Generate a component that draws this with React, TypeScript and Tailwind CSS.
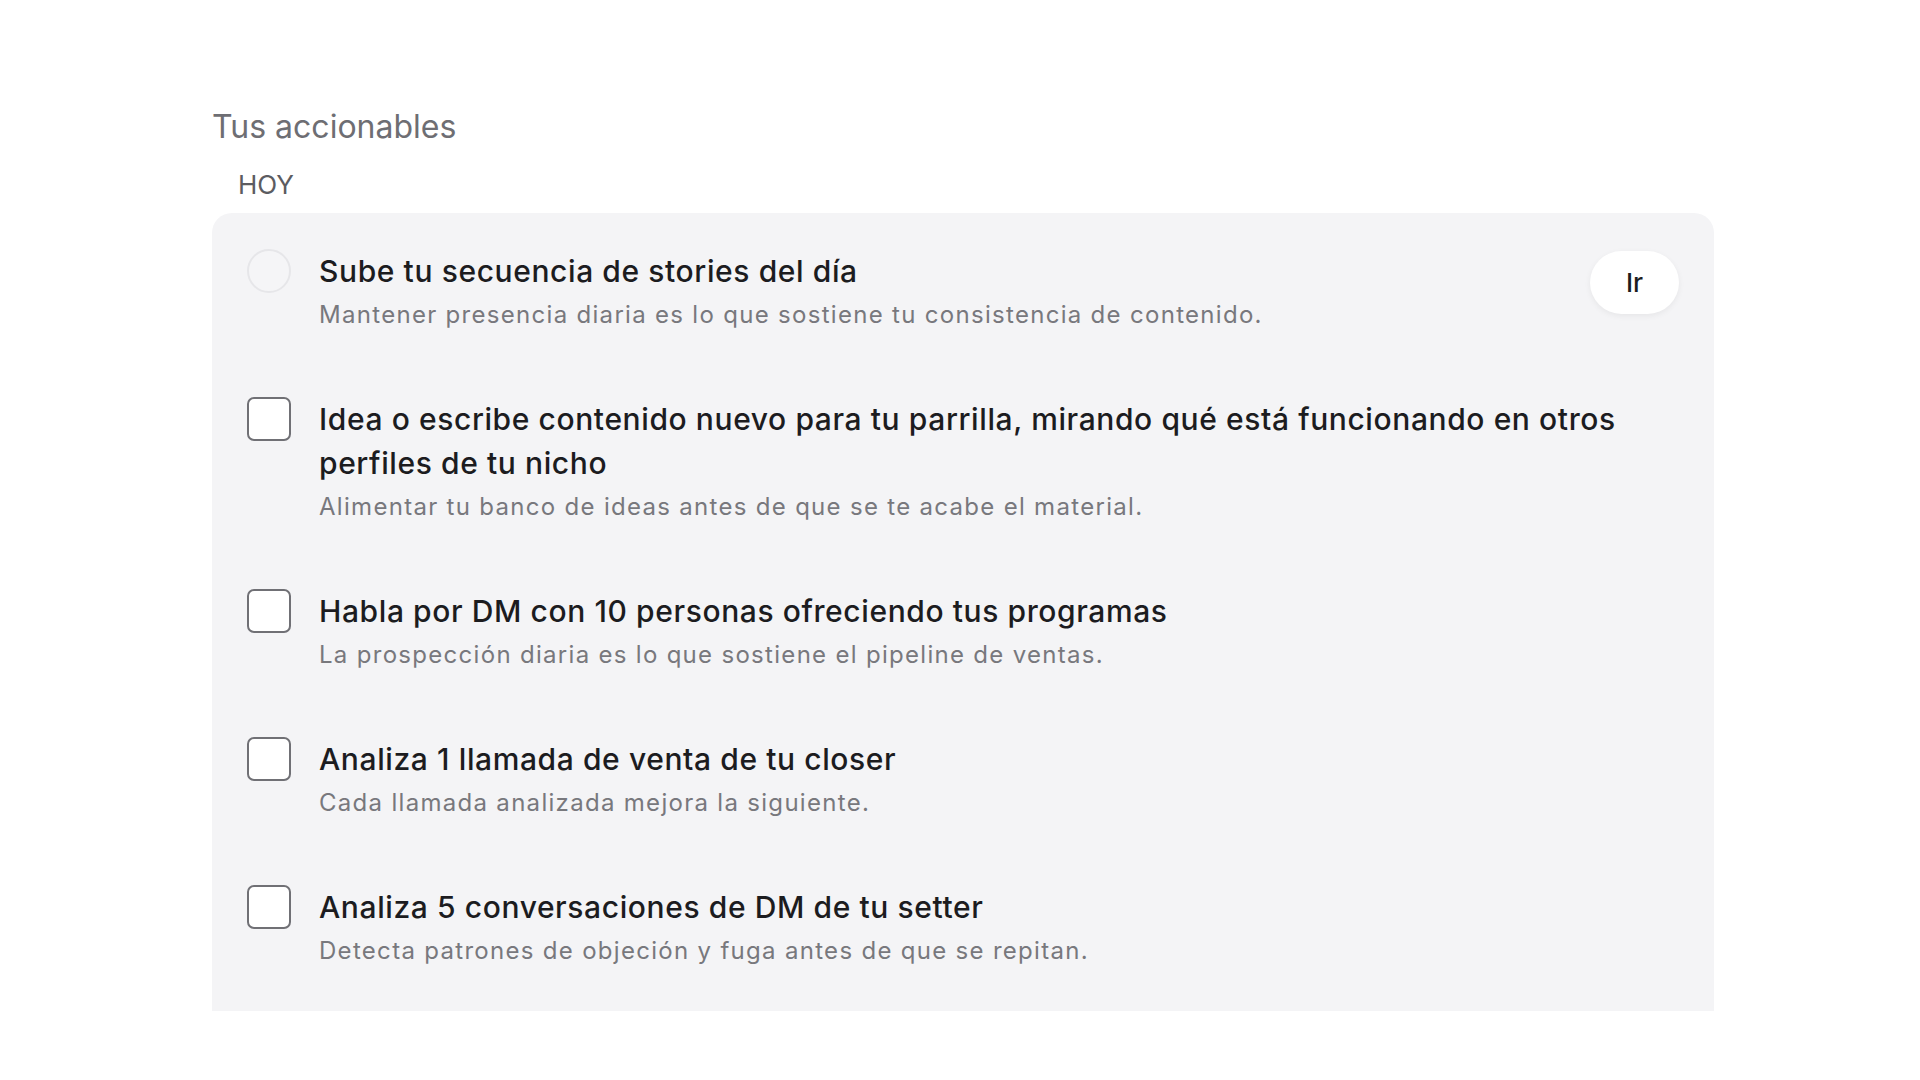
import React from 'react';

type Task = {
    title: string;
    desc: string;
    kind: 'circle' | 'box';
    action?: string;
};

const tasks: Task[] = [
    {
        title: 'Sube tu secuencia de stories del día',
        desc: 'Mantener presencia diaria es lo que sostiene tu consistencia de contenido.',
        kind: 'circle',
        action: 'Ir',
    },
    {
        title: 'Idea o escribe contenido nuevo para tu parrilla, mirando qué está funcionando en otros perfiles de tu nicho',
        desc: 'Alimentar tu banco de ideas antes de que se te acabe el material.',
        kind: 'box',
    },
    {
        title: 'Habla por DM con 10 personas ofreciendo tus programas',
        desc: 'La prospección diaria es lo que sostiene el pipeline de ventas.',
        kind: 'box',
    },
    {
        title: 'Analiza 1 llamada de venta de tu closer',
        desc: 'Cada llamada analizada mejora la siguiente.',
        kind: 'box',
    },
    {
        title: 'Analiza 5 conversaciones de DM de tu setter',
        desc: 'Detecta patrones de objeción y fuga antes de que se repitan.',
        kind: 'box',
    },
];

function TaskRow({ task }: { task: Task }) {
    return (
        <div className="flex items-start">
            {task.kind === 'circle' ? (
                <div className="h-[44px] w-[44px] shrink-0 rounded-full border-2 border-[#e6e6e9] bg-[#f5f5f7]" />
            ) : (
                <div className="h-[44px] w-[44px] shrink-0 rounded-[7px] border-2 border-[#707075] bg-white" />
            )}
            <div className="ml-[28px] min-w-0 flex-1">
                <div className="text-[30px] font-medium leading-[44px] tracking-[0.6px] text-[#1c1c1f]">{task.title}</div>
                <div className="mt-[4px] text-[24px] leading-[36px] tracking-[1.3px] text-[#78787d]">{task.desc}</div>
            </div>
            {task.action && (
                <button className="ml-[24px] mt-[2px] h-[63px] w-[89px] shrink-0 rounded-full bg-white text-[26px] font-medium text-[#1c1c1f] shadow-[0_2px_6px_rgba(0,0,0,0.06)]">
                    {task.action}
                </button>
            )}
        </div>
    );
}

export default function App() {
    return (
        <div className="min-h-screen bg-white font-['Inter',sans-serif]">
            <div className="ml-[212px] w-[1502px] pt-[103px]">
                <h2 className="text-[32px] leading-[48px] text-[#6e6e73]">Tus accionables</h2>
                <div className="ml-[26px] mt-[16px] text-[26px] leading-[36px] text-[#5c5c61]">HOY</div>
                <div className="mt-[10px] flex flex-col gap-[64px] rounded-t-[20px] bg-[#f4f4f6] px-[35px] pb-[42px] pt-[36px]">
                    {tasks.map((t) => (
                        <TaskRow key={t.title} task={t} />
                    ))}
                </div>
            </div>
        </div>
    );
}
